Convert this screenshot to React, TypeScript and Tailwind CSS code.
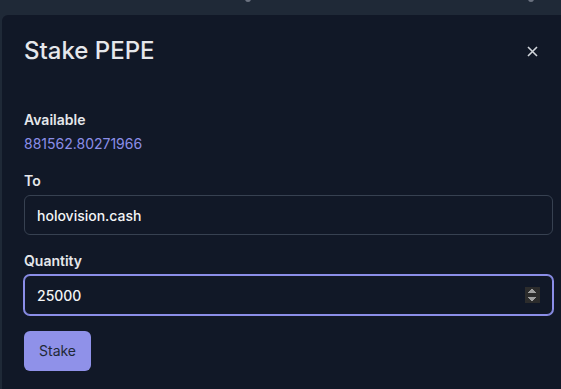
import React from "react";

export default function App() {
  return (
    <div className="min-h-screen bg-[#1f2937] font-['Inter','Liberation_Sans',sans-serif] overflow-hidden">
      <div className="relative h-[15px]">
        <span className="absolute left-[245px] -top-[4px] h-[6px] w-[6px] rounded-full bg-[#6b7280]" />
        <span className="absolute left-[528px] -top-[4px] h-[6px] w-[6px] rounded-full bg-[#6b7280]" />
      </div>
      <div className="ml-[2px] h-[374px] rounded-tl-md bg-[#111827] pl-[22px] pr-2">
        <div className="flex items-center justify-between pt-5">
          <h2 className="text-2xl leading-8 font-medium text-[#e5e7eb]">Stake PEPE</h2>
          <button className="mr-[15px] text-[#d1d5db]" aria-label="Close">
            <svg width="11" height="11" viewBox="0 0 11 11" fill="none" stroke="currentColor" strokeWidth="1.6">
              <path d="M1 1l9 9M10 1l-9 9" />
            </svg>
          </button>
        </div>

        <div className="mt-[43px] flex flex-col">
          <span className="text-sm font-semibold text-[#e5e7eb]">Available</span>
          <span className="mt-1 text-sm text-[#8b8ee8]">881562.80271966</span>

          <label className="mt-[17px] text-sm font-semibold text-[#e5e7eb]">To</label>
          <input
            defaultValue="holovision.cash"
            className="mt-1 h-10 rounded-md border border-[#374151] bg-[#111827] px-3 text-sm font-medium text-[#f3f4f6] outline-none"
          />

          <label className="mt-4 text-sm font-semibold text-[#e5e7eb]">Quantity</label>
          <input
            type="number"
            autoFocus
            defaultValue="25000"
            className="mt-1 h-10 rounded-md border border-[#8b8ee8] bg-[#111827] px-3 text-sm font-medium text-[#f3f4f6] caret-white outline-none ring-1 ring-[#8b8ee8] [color-scheme:dark]"
          />

          <div className="mt-4">
            <button className="h-10 rounded-md bg-[#8f91e9] px-[15px] text-sm text-[#1f2937]">Stake</button>
          </div>
        </div>
      </div>
    </div>
  );
}
